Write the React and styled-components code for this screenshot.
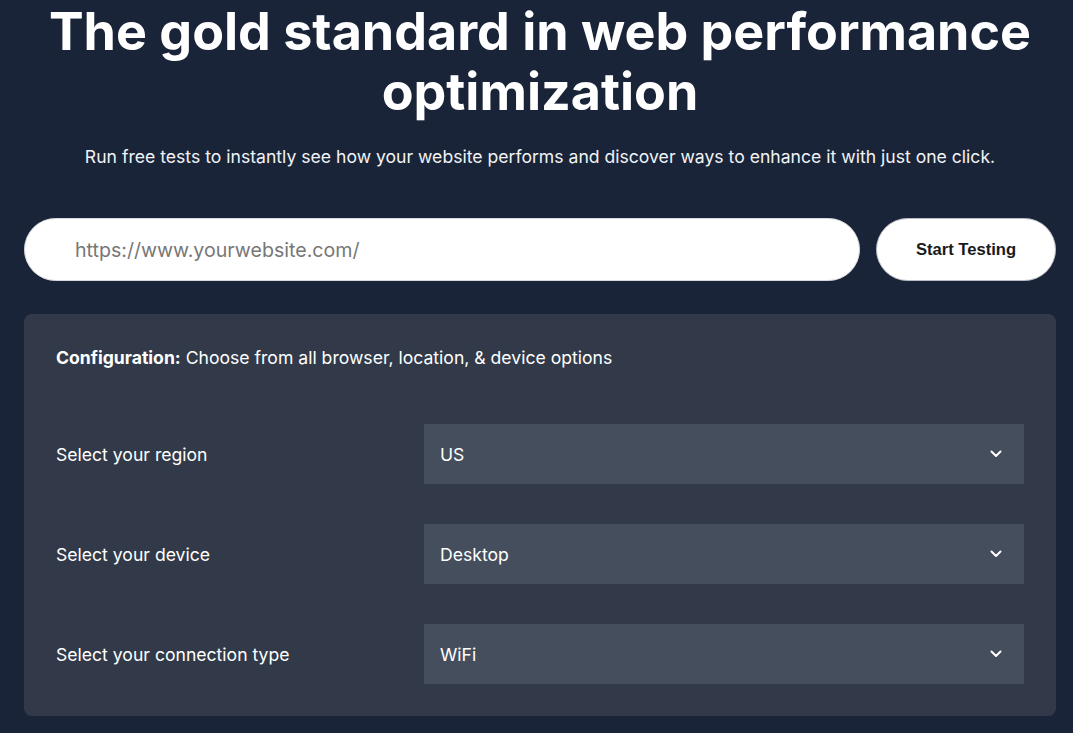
import React from "react";
import styled, { createGlobalStyle } from "styled-components";

const GlobalStyle = createGlobalStyle`
  html, body {
    margin: 0;
    padding: 0;
    background: #1a2438;
  }
  body {
    font-family: Inter, "Noto Sans", sans-serif;
    color: #fff;
  }
  * {
    box-sizing: border-box;
  }
`;

const rows = [
  { label: "Select your region", value: "US" },
  { label: "Select your device", value: "Desktop" },
  { label: "Select your connection type", value: "WiFi" },
];

function Chevron() {
  return (
    <svg width="14" height="14" viewBox="0 0 14 14" fill="none">
      <path
        d="M2.5 4.5 L7 9 L11.5 4.5"
        stroke="#fff"
        strokeWidth="2"
        strokeLinecap="round"
        strokeLinejoin="round"
      />
    </svg>
  );
}

export default function App() {
  return (
    <Page>
      <GlobalStyle />
      <Title>The gold standard in web performance optimization</Title>
      <Subtitle>
        Run free tests to instantly see how your website performs and discover
        ways to enhance it with just one click.
      </Subtitle>

      <SearchRow>
        <UrlInput type="text" placeholder="https://www.yourwebsite.com/" />
        <StartButton>Start Testing</StartButton>
      </SearchRow>

      <Panel>
        <PanelIntro>
          <strong>Configuration:</strong> Choose from all browser, location, &amp;
          device options
        </PanelIntro>
        <Options>
          {rows.map((row) => (
            <OptionRow key={row.label}>
              <Label>{row.label}</Label>
              <Select>
                <span>{row.value}</span>
                <Chevron />
              </Select>
            </OptionRow>
          ))}
        </Options>
      </Panel>
    </Page>
  );
}

const Page = styled.div`
  padding: 2px 17px 0 24px;
  display: flex;
  flex-direction: column;
`;

const Title = styled.h1`
  margin: 0;
  font-size: 52px;
  line-height: 60px;
  font-weight: 700;
  text-align: center;
`;

const Subtitle = styled.p`
  margin: 22px 0 0;
  text-align: center;
  font-size: 17.6px;
  line-height: 26px;
  color: #f1f3f6;
`;

const SearchRow = styled.div`
  margin-top: 48px;
  display: flex;
  gap: 16px;
`;

const UrlInput = styled.input`
  flex: 1;
  height: 63px;
  border: 1px solid #d6d8dc;
  border-radius: 32px;
  padding: 0 50px;
  font-family: Inter, sans-serif;
  font-size: 19.6px;
  color: #333;
  background: #fff;
  outline: none;

  &::placeholder {
    color: #777;
  }
`;

const StartButton = styled.button`
  width: 180px;
  height: 63px;
  border: 1px solid #b9bcc2;
  border-radius: 32px;
  background: #fff;
  font-family: "Liberation Sans", Arial, sans-serif;
  font-weight: 700;
  font-size: 16.6px;
  color: #1a1a1a;
  cursor: pointer;
`;

const Panel = styled.section`
  margin-top: 33px;
  background: #323a4a;
  border-radius: 8px;
  padding: 33px 32px 32px;
`;

const PanelIntro = styled.p`
  margin: 0;
  font-size: 17.6px;
  line-height: 22px;
  color: #fff;

  strong {
    font-weight: 700;
  }
`;

const Options = styled.div`
  margin-top: 55px;
  display: flex;
  flex-direction: column;
  gap: 40px;
`;

const OptionRow = styled.div`
  display: flex;
  align-items: center;
`;

const Label = styled.div`
  width: 368px;
  font-size: 17.6px;
  color: #fff;
`;

const Select = styled.div`
  flex: 1;
  height: 60px;
  background: #454e5d;
  display: flex;
  align-items: center;
  justify-content: space-between;
  padding: 0 21px 0 16px;
  font-size: 17.6px;
  color: #fff;
  cursor: pointer;
`;
